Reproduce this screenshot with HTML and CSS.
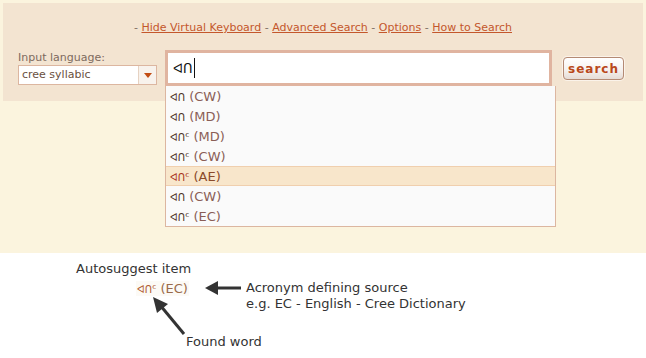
FILE: index.html
```html
<!DOCTYPE html>
<html>
<head>
<meta charset="utf-8">
<link rel="stylesheet" href="styles.css">
</head>
<body>
<div class="top">
  <div class="band">
    <div class="links">- <a href="#">Hide Virtual Keyboard</a> - <a href="#">Advanced Search</a> - <a href="#">Options</a> - <a href="#">How to Search</a></div>
    <div class="form">
      <div class="lang">
        <div class="label">Input language:</div>
        <div class="select"><span class="sel-text">cree syllabic</span><span class="sel-btn"><span class="tri"></span></span></div>
      </div>
      <div class="query">
        <div class="input"><span class="typed">ᐊᑎ</span><span class="caret"></span></div>
        <ul class="suggest">
          <li><span class="w">ᐊᑎ</span> (CW)</li>
          <li><span class="w">ᐊᑎ</span> (MD)</li>
          <li><span class="w">ᐊᑎᑦ</span> (MD)</li>
          <li><span class="w">ᐊᑎᑦ</span> (CW)</li>
          <li class="hl"><span class="w">ᐊᑎᑦ</span> (AE)</li>
          <li><span class="w">ᐊᑎ</span> (CW)</li>
          <li><span class="w">ᐊᑎᑦ</span> (EC)</li>
        </ul>
      </div>
      <button class="search">search</button>
    </div>
  </div>
</div>
<div class="legend">
  <div class="title">Autosuggest item</div>
  <div class="sample"><span class="w">ᐊᑎᑦ</span> (EC)</div>
  <svg class="arrows" width="646" height="110" viewBox="0 0 646 110">
    <g stroke="#333" stroke-width="3" fill="none">
      <line x1="241" y1="35" x2="214" y2="35"/>
      <line x1="184" y1="81" x2="160" y2="52"/>
    </g>
    <polygon points="205,35 218,28 218,42" fill="#333"/>
    <polygon points="153,44 168,51 157,60" fill="#333"/>
  </svg>
  <div class="acr">Acronym defining source<br>e.g. EC - English - Cree Dictionary</div>
  <div class="found">Found word</div>
</div>
</body>
</html>
```
FILE: styles.css
```css
* { box-sizing: border-box; }
body {
  margin: 0;
  font-family: "DejaVu Sans", Verdana, sans-serif;
  background: #fff;
}
.top {
  background: #fbf4de;
  height: 253px;
  padding: 3px 3px 0 3px;
}
.band {
  background: #f3e4d1;
  height: 98px;
  padding-top: 17px;
}
.links {
  text-align: center;
  font-size: 11px;
  line-height: 15px;
  color: #7f7066;
}
.links a {
  color: #c4572c;
  text-decoration: underline;
}
.form {
  display: flex;
  align-items: flex-start;
  margin-top: 15px;
  padding-left: 15px;
}
.lang {
  width: 139px;
  margin-top: 1px;
}
.label {
  font-size: 11px;
  line-height: 14px;
  color: #7d6a5e;
}
.select {
  display: flex;
  height: 20px;
  border: 1px solid #dcb6a0;
  background: #fff;
}
.sel-text {
  flex: 1;
  font-size: 11px;
  line-height: 18px;
  padding-left: 3px;
  color: #6a5040;
}
.sel-btn {
  width: 18px;
  border-left: 1px solid #e6d2c2;
  background: #f8f2ec;
  display: flex;
  align-items: center;
  justify-content: center;
}
.tri {
  width: 0;
  height: 0;
  border-left: 4px solid transparent;
  border-right: 4px solid transparent;
  border-top: 5px solid #c24c12;
}
.query {
  position: relative;
  margin-left: 8px;
  width: 387px;
}
.input {
  height: 36px;
  border: 3px solid #e0b4a0;
  background: #fff;
  display: flex;
  align-items: center;
  padding-left: 5px;
}
.typed {
  font-size: 13px;
  color: #111;
}
.caret {
  width: 1px;
  height: 20px;
  background: #111;
  margin-left: 1px;
}
.suggest {
  position: absolute;
  left: 0;
  top: 36px;
  width: 391px;
  margin: 0;
  padding: 0;
  list-style: none;
  background: #fafafa;
  border: 1px solid #dcb6a0;
  border-top: none;
}
.suggest li {
  height: 20px;
  line-height: 21px;
  font-size: 13px;
  padding-left: 4px;
  color: #8a5e56;
}
.w {
  font-size: 10px;
}
.suggest .w { color: #4e3226; }
.suggest li.hl {
  background: #f8e6cb;
  border-top: 1px solid #f0cfae;
  border-bottom: 1px solid #f0cfae;
  line-height: 19px;
  color: #8a4a2a;
}
.suggest li.hl .w { color: #a8321a; }
.search {
  margin-left: 11px;
  margin-top: 7px;
  width: 61px;
  height: 23px;
  border: 1px solid #b48a74;
  border-radius: 4px;
  background: linear-gradient(#ffffff, #f6f2ef 55%, #e6dcd6);
  box-shadow: 0 0 0 1px #fbf3ea;
  font-family: "DejaVu Sans", Verdana, sans-serif;
  font-size: 12px;
  font-weight: bold;
  letter-spacing: 1px;
  color: #b9481a;
  padding: 0;
}
.legend {
  position: relative;
  height: 105px;
  font-size: 13px;
  color: #333;
}
.title {
  position: absolute;
  left: 76px;
  top: 8px;
}
.sample {
  position: absolute;
  left: 136px;
  top: 28px;
  color: #9a6a4a;
  background: #fcfaf6;
  padding: 0 1px;
}
.sample .w { color: #b05a30; }
.acr {
  position: absolute;
  left: 246px;
  top: 27px;
  line-height: 16px;
}
.found {
  position: absolute;
  left: 186px;
  top: 81px;
}
.arrows {
  position: absolute;
  left: 0;
  top: 0;
}
```
